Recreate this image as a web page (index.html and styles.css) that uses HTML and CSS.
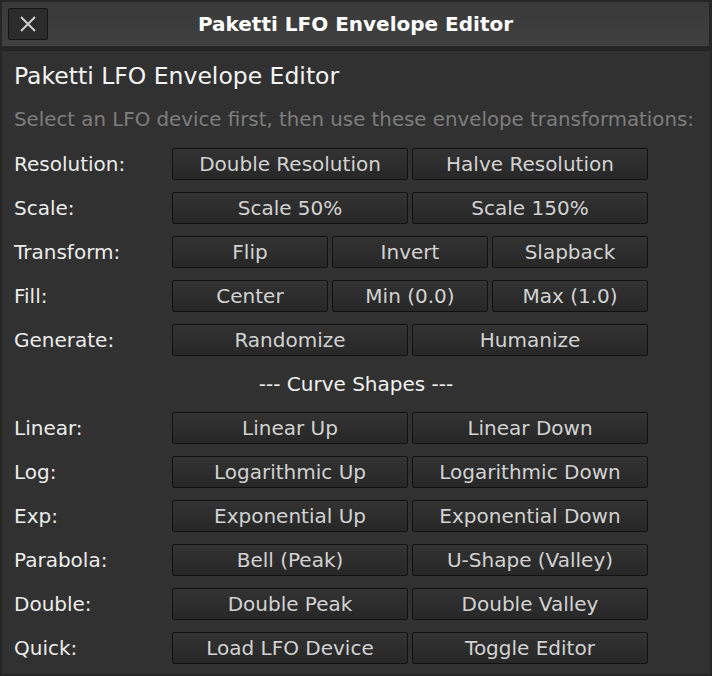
FILE: index.html
```html
<!DOCTYPE html>
<html lang="en">
<head>
<meta charset="UTF-8">
<title>Paketti LFO Envelope Editor</title>
<link rel="stylesheet" href="styles.css">
</head>
<body>
    <div class="window">
        <div class="titlebar">
            <button class="close">
                <svg width="18" height="18" viewBox="0 0 18 18"><path d="M2 2 L16 16 M16 2 L2 16" stroke="#cfcfcf" stroke-width="2"/></svg>
            </button>
            <div class="wintitle">Paketti LFO Envelope Editor</div>
        </div>
        <div class="panel">
            <div class="heading">Paketti LFO Envelope Editor</div>
            <div class="hint">Select an LFO device first, then use these envelope transformations:</div>

            <div class="row">
                <div class="label">Resolution:</div>
                <div class="btns two"><button class="btn">Double Resolution</button><button class="btn">Halve Resolution</button></div>
            </div>
            <div class="row">
                <div class="label">Scale:</div>
                <div class="btns two"><button class="btn">Scale 50%</button><button class="btn">Scale 150%</button></div>
            </div>
            <div class="row">
                <div class="label">Transform:</div>
                <div class="btns three"><button class="btn">Flip</button><button class="btn">Invert</button><button class="btn">Slapback</button></div>
            </div>
            <div class="row">
                <div class="label">Fill:</div>
                <div class="btns three"><button class="btn">Center</button><button class="btn">Min (0.0)</button><button class="btn">Max (1.0)</button></div>
            </div>
            <div class="row">
                <div class="label">Generate:</div>
                <div class="btns two"><button class="btn">Randomize</button><button class="btn">Humanize</button></div>
            </div>

            <div class="row section">--- Curve Shapes ---</div>

            <div class="row">
                <div class="label">Linear:</div>
                <div class="btns two"><button class="btn">Linear Up</button><button class="btn">Linear Down</button></div>
            </div>
            <div class="row">
                <div class="label">Log:</div>
                <div class="btns two"><button class="btn">Logarithmic Up</button><button class="btn">Logarithmic Down</button></div>
            </div>
            <div class="row">
                <div class="label">Exp:</div>
                <div class="btns two"><button class="btn">Exponential Up</button><button class="btn">Exponential Down</button></div>
            </div>
            <div class="row">
                <div class="label">Parabola:</div>
                <div class="btns two"><button class="btn">Bell (Peak)</button><button class="btn">U-Shape (Valley)</button></div>
            </div>
            <div class="row">
                <div class="label">Double:</div>
                <div class="btns two"><button class="btn">Double Peak</button><button class="btn">Double Valley</button></div>
            </div>
            <div class="row">
                <div class="label">Quick:</div>
                <div class="btns two"><button class="btn">Load LFO Device</button><button class="btn">Toggle Editor</button></div>
            </div>
        </div>
    </div>
</body>
</html>
```

FILE: styles.css
```css
body {
    margin: 0;
    background-color: #262626;
    font-family: "DejaVu Sans", sans-serif;
    color: #ececec;
}
.window {
    width: 712px;
    height: 676px;
    padding: 2px;
    box-sizing: border-box;
    display: flex;
    flex-direction: column;
}
.titlebar {
    height: 43px;
    margin-right: 1px;
    display: flex;
    align-items: center;
    background: linear-gradient(#3a3a3a, #3f3f3f);
    border-bottom: 1px solid #444;
}
.close {
    width: 40px;
    height: 32px;
    margin-left: 6px;
    padding: 0;
    display: flex;
    align-items: center;
    justify-content: center;
    background-color: #2c2c2c;
    border: 1px solid #151515;
    border-radius: 2px;
}
.wintitle {
    flex: 1;
    text-align: center;
    font-weight: bold;
    font-size: 20px;
    color: #fff;
    margin-right: 46px;
}
.panel {
    flex: 1;
    margin-top: 4px;
    border-top: 1px solid #222;
    background-color: #313131;
    padding: 9px 12px 0 12px;
    display: flex;
    flex-direction: column;
    gap: 12px;
}
.heading {
    height: 32px;
    line-height: 32px;
    font-size: 23.5px;
    color: #f4f4f4;
}
.hint {
    height: 32px;
    line-height: 32px;
    font-size: 19.8px;
    color: #7e7e7e;
    white-space: nowrap;
}
.row {
    height: 32px;
    display: flex;
    align-items: center;
    font-size: 20px;
}
.section {
    justify-content: center;
    color: #f2f2f2;
}
.label {
    width: 158px;
}
.btns {
    display: grid;
    gap: 4px;
    width: 476px;
}
.two {
    grid-template-columns: repeat(2, 1fr);
}
.three {
    grid-template-columns: repeat(3, 1fr);
}
.btn {
    height: 32px;
    font-family: "DejaVu Sans", sans-serif;
    font-size: 20px;
    color: #d2d2d2;
    background: linear-gradient(#333333, #2c2c2c 55%, #272727);
    border: 1px solid #111;
    border-radius: 2px;
    padding: 0;
}
```
